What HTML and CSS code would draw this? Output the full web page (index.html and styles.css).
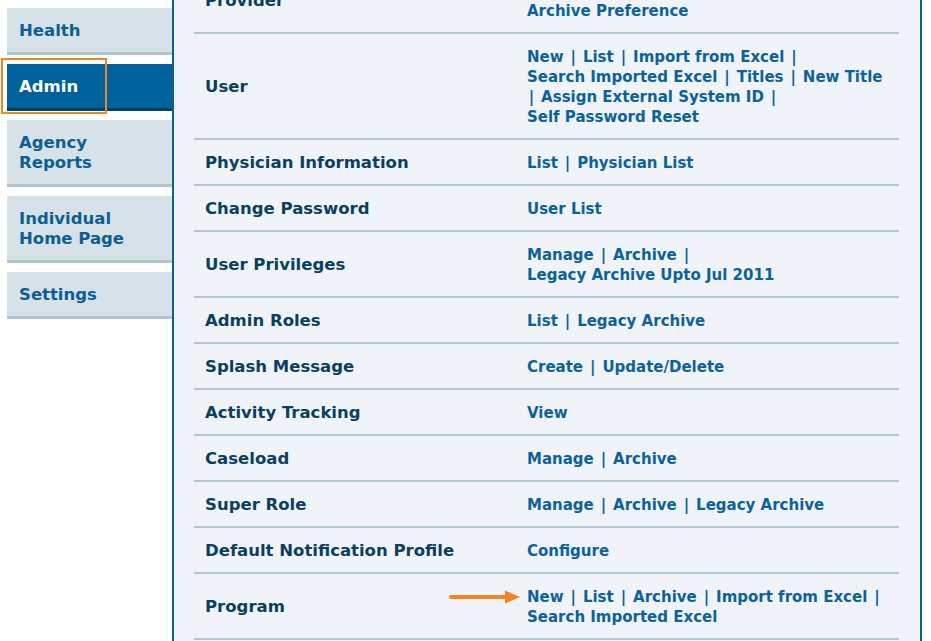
FILE: index.html
```html
<!DOCTYPE html>
<html>
<head>
<meta charset="utf-8">
<link rel="stylesheet" href="styles.css">
</head>
<body>
<div class="page">
  <nav class="sidebar">
    <a class="tab">Health</a>
    <a class="tab active">Admin</a>
    <a class="tab">Agency<br>Reports</a>
    <a class="tab">Individual<br>Home Page</a>
    <a class="tab">Settings</a>
    <div class="highlight"></div>
  </nav>
  <main class="panel">
    <div class="table">
      <div class="row">
        <div class="label">Provider</div>
        <div class="links"><a>New</a> <span class="sep">|</span> <a>List</a> <span class="sep">|</span> <a>Archive</a> <span class="sep">|</span><br><a>Archive Preference</a></div>
      </div>
      <div class="row">
        <div class="label">User</div>
        <div class="links"><a>New</a> <span class="sep">|</span> <a>List</a> <span class="sep">|</span> <a>Import from Excel</a> <span class="sep">|</span> <a>Search Imported Excel</a> <span class="sep">|</span> <a>Titles</a> <span class="sep">|</span> <a>New Title</a> <span class="sep">|</span> <a>Assign External System ID</a> <span class="sep">|</span> <a>Self Password Reset</a></div>
      </div>
      <div class="row">
        <div class="label">Physician Information</div>
        <div class="links"><a>List</a> <span class="sep">|</span> <a>Physician List</a></div>
      </div>
      <div class="row">
        <div class="label">Change Password</div>
        <div class="links"><a>User List</a></div>
      </div>
      <div class="row">
        <div class="label">User Privileges</div>
        <div class="links"><a>Manage</a> <span class="sep">|</span> <a>Archive</a> <span class="sep">|</span> <a>Legacy Archive Upto Jul 2011</a></div>
      </div>
      <div class="row">
        <div class="label">Admin Roles</div>
        <div class="links"><a>List</a> <span class="sep">|</span> <a>Legacy Archive</a></div>
      </div>
      <div class="row">
        <div class="label">Splash Message</div>
        <div class="links"><a>Create</a> <span class="sep">|</span> <a>Update/Delete</a></div>
      </div>
      <div class="row">
        <div class="label">Activity Tracking</div>
        <div class="links"><a>View</a></div>
      </div>
      <div class="row">
        <div class="label">Caseload</div>
        <div class="links"><a>Manage</a> <span class="sep">|</span> <a>Archive</a></div>
      </div>
      <div class="row">
        <div class="label">Super Role</div>
        <div class="links"><a>Manage</a> <span class="sep">|</span> <a>Archive</a> <span class="sep">|</span> <a>Legacy Archive</a></div>
      </div>
      <div class="row">
        <div class="label">Default Notification Profile</div>
        <div class="links"><a>Configure</a></div>
      </div>
      <div class="row">
        <div class="label">Program</div>
        <div class="links"><span class="arrow"><svg width="72" height="14" viewBox="0 0 72 14"><path d="M2 7 H58" stroke="#f5841f" stroke-width="4" stroke-linecap="round"/><path d="M56 0.5 L71 7 L56 13.5 Z" fill="#f5841f"/></svg></span><a>New</a> <span class="sep">|</span> <a>List</a> <span class="sep">|</span> <a>Archive</a> <span class="sep">|</span> <a>Import from Excel</a> <span class="sep">|</span> <a>Search Imported Excel</a></div>
      </div>
    </div>
  </main>
</div>
</body>
</html>
```
FILE: styles.css
```css
html, body {
  margin: 0;
  padding: 0;
  background: #ffffff;
}
body {
  font-family: "DejaVu Sans", Verdana, sans-serif;
  font-weight: bold;
  font-size: 16.5px;
  line-height: 20px;
}
.page {
  display: flex;
  height: 641px;
  overflow: hidden;
}
.sidebar {
  position: relative;
  width: 165px;
  padding: 8px 0 0 7px;
  display: flex;
  flex-direction: column;
  gap: 9px;
}
.tab {
  display: block;
  background: #d7e1e8;
  border-bottom: 3px solid #b0c4d0;
  color: #0b5f95;
  padding: 13px 12px 11px;
}
.tab.active {
  background: #00629a;
  border-bottom-color: #004166;
  color: #ffffff;
}
.highlight {
  position: absolute;
  left: 1px;
  top: 58px;
  width: 102px;
  height: 52px;
  border: 2px solid #f0862a;
}
.panel {
  height: 641px;
  border-left: 2px solid #0b5f95;
  border-right: 2px solid #0b5f95;
  background: #f0f4f8;
  padding: 0 21px 0 20px;
  box-sizing: border-box;
  width: 750px;
  overflow: hidden;
}
.table {
  margin-top: -32px;
}
.row {
  display: grid;
  grid-template-columns: 333px 1fr;
  align-items: center;
  border-bottom: 2px solid #b3c7d2;
}
.label {
  padding: 13px 11px 11px;
  color: #0a3f5f;
}
.links {
  position: relative;
  padding: 13px 12px 11px 0;
  color: #0b629b;
  font-size: 15px;
}
.links a {
  white-space: nowrap;
}
.sep {
  padding: 0 1.7px;
}
.arrow {
  position: absolute;
  left: -78px;
  top: 16px;
  width: 72px;
  height: 14px;
  display: block;
}
.arrow svg {
  display: block;
}
```
